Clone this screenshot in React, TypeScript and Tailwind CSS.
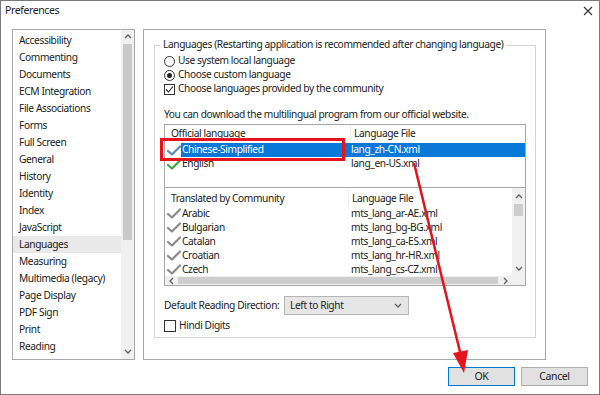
import React from "react";

const categories = [
  "Accessibility",
  "Commenting",
  "Documents",
  "ECM Integration",
  "File Associations",
  "Forms",
  "Full Screen",
  "General",
  "History",
  "Identity",
  "Index",
  "JavaScript",
  "Languages",
  "Measuring",
  "Multimedia (legacy)",
  "Page Display",
  "PDF Sign",
  "Print",
  "Reading",
];

const community = [
  ["Arabic", "mts_lang_ar-AE.xml"],
  ["Bulgarian", "mts_lang_bg-BG.xml"],
  ["Catalan", "mts_lang_ca-ES.xml"],
  ["Croatian", "mts_lang_hr-HR.xml"],
  ["Czech", "mts_lang_cs-CZ.xml"],
];

function Check({ color }: { color: string }) {
  return (
    <svg width="14" height="11" viewBox="0 0 14 11" className="shrink-0">
      <path d="M1 6 L5 9.5 L13 1.5" fill="none" stroke={color} strokeWidth="2.2" strokeLinecap="round" strokeLinejoin="round" />
    </svg>
  );
}

function Chevron({ dir }: { dir: "up" | "down" | "left" | "right" }) {
  const d = {
    up: "M1 5 L4 2 L7 5",
    down: "M1 2 L4 5 L7 2",
    left: "M5 1 L2 4 L5 7",
    right: "M2 1 L5 4 L2 7",
  }[dir];
  return (
    <svg width="8" height="8" viewBox="0 0 8 8">
      <path d={d} fill="none" stroke="#606060" strokeWidth="1.3" />
    </svg>
  );
}

export default function App() {
  return (
    <div
      className="relative w-[600px] h-[395px] bg-white border border-[#7a7a7a] flex flex-col text-[10.2px] tracking-[-0.4px] text-[#222] whitespace-nowrap overflow-hidden"
      style={{ fontFamily: '"Noto Sans", "Open Sans", sans-serif' }}
    >
      {/* title bar */}
      <div className="h-[28px] flex items-center justify-between pl-[4px] pr-[6px] shrink-0">
        <span className="text-[10.5px] -mt-[8px]">Preferences</span>
        <svg width="10" height="10" viewBox="0 0 10 10" className="-mt-[8px]">
          <path d="M1 1 L9 9 M9 1 L1 9" stroke="#333" strokeWidth="1.1" />
        </svg>
      </div>

      <div className="flex gap-[8px] pl-[11px] h-[331px] shrink-0">
        {/* category list */}
        <div className="w-[123px] h-full border border-[#a8a8a8] flex">
          <div className="flex-1 flex flex-col pt-[2px]">
            {categories.map((c) => (
              <div
                key={c}
                className={`h-[17px] leading-[17px] pl-[6px] ${c === "Languages" ? "bg-[#e9e9e9]" : ""}`}
              >
                {c}
              </div>
            ))}
          </div>
          <div className="w-[13px] bg-[#f0f0f0] flex flex-col items-center">
            <div className="h-[14px] flex items-center">
              <Chevron dir="up" />
            </div>
            <div className="w-[9px] h-[196px] bg-[#c9c9c9]" />
            <div className="flex-1" />
            <div className="h-[14px] flex items-center">
              <Chevron dir="down" />
            </div>
          </div>
        </div>

        {/* settings panel */}
        <div className="w-[403px] h-full border border-[#a8a8a8] pt-[15px] pl-[10px] pr-[9px] pb-[21px]">
          <div className="relative h-full border border-[#d5d5d5] px-[9px] pt-[8px]">
            <span className="absolute -top-[9px] left-[5px] bg-white px-[3px]">
              Languages (Restarting application is recommended after changing language)
            </span>
            <div className="flex flex-col">
              <div className="h-[14px] flex items-center gap-[3px]">
                <span className="w-[11px] h-[11px] rounded-full border border-[#333] bg-white" />
                <span>Use system local language</span>
              </div>
              <div className="h-[14px] flex items-center gap-[3px]">
                <span className="w-[11px] h-[11px] rounded-full border border-[#333] bg-white flex items-center justify-center">
                  <span className="w-[5px] h-[5px] rounded-full bg-[#222]" />
                </span>
                <span>Choose custom language</span>
              </div>
              <div className="h-[14px] flex items-center gap-[3px]">
                <span className="w-[11px] h-[11px] border border-[#333] bg-white flex items-center justify-center">
                  <svg width="9" height="9" viewBox="0 0 9 9">
                    <path d="M1 4.5 L3.5 7 L8 1.5" fill="none" stroke="#222" strokeWidth="1.1" />
                  </svg>
                </span>
                <span>Choose languages provided by the community</span>
              </div>
              <div className="h-[14px] leading-[14px] mt-[11px]">
                You can download the multilingual program from our official website.
              </div>
            </div>

            {/* official table */}
            <div className="mt-[3px] border border-[#a8a8a8] h-[64px] flex flex-col">
              <div className="h-[18px] flex items-center">
                <span className="w-[186px] pl-[6px] border-r border-[#ececec] h-full flex items-center">Official language</span>
                <span className="pl-[3px]">Language File</span>
              </div>
              <div className="h-[14px] flex items-center pl-[2px]">
                <span className="w-[14px] flex justify-center"><Check color="#5b87b8" /></span>
                <div className="flex-1 h-full bg-[#0a78d7] text-white flex items-center">
                  <span className="w-[170px] pl-[1px]">Chinese-Simplified</span>
                  <span>lang_zh-CN.xml</span>
                </div>
              </div>
              <div className="h-[14px] flex items-center pl-[2px]">
                <span className="w-[14px] flex justify-center"><Check color="#3fa33f" /></span>
                <span className="w-[170px] pl-[1px]">English</span>
                <span>lang_en-US.xml</span>
              </div>
            </div>

            {/* community table */}
            <div className="border border-[#a8a8a8] border-t-0 h-[98px] flex">
              <div className="flex-1 flex flex-col">
                <div className="h-[19px] flex items-center mt-[2px]">
                  <span className="w-[184px] pl-[6px] border-r border-[#ececec] h-full flex items-center">Translated by Community</span>
                  <span className="pl-[3px]">Language File</span>
                </div>
                {community.map(([n, f]) => (
                  <div key={n} className="h-[14px] flex items-center pl-[2px]">
                    <span className="w-[14px] flex justify-center"><Check color="#8a8a8a" /></span>
                    <span className="w-[170px] pl-[1px]">{n}</span>
                    <span>{f}</span>
                  </div>
                ))}
                <div className="flex-1" />
                <div className="h-[10px] bg-[#f0f0f0] flex items-center">
                  <span className="w-[13px] flex justify-center"><Chevron dir="left" /></span>
                  <div className="w-[320px] h-[7px] bg-[#cdcdcd]" />
                  <div className="flex-1" />
                  <span className="w-[13px] flex justify-center"><Chevron dir="right" /></span>
                </div>
              </div>
              <div className="w-[13px] bg-[#f0f0f0] flex flex-col items-center pb-[10px]">
                <div className="h-[14px] flex items-center mt-[2px]">
                  <Chevron dir="up" />
                </div>
                <div className="w-[9px] h-[12px] bg-[#cdcdcd]" />
                <div className="flex-1" />
                <div className="h-[12px] flex items-center">
                  <Chevron dir="down" />
                </div>
              </div>
            </div>

            <div className="flex items-center mt-[10px] h-[19px]">
              <span className="w-[120px]">Default Reading Direction:</span>
              <div className="w-[125px] h-[19px] border border-[#b5b5b5] bg-[#e6e6e6] flex items-center justify-between pl-[5px] pr-[6px]">
                <span>Left to Right</span>
                <Chevron dir="down" />
              </div>
            </div>
            <div className="h-[14px] flex items-center gap-[3px] mt-[4px]">
              <span className="w-[12px] h-[12px] border border-[#333] bg-white" />
              <span>Hindi Digits</span>
            </div>
          </div>
        </div>
      </div>

      {/* buttons */}
      <div className="flex justify-end gap-[6px] pr-[11px] mt-[7px]">
        <button className="w-[67px] h-[19px] bg-[#e1e1e1] border border-[#0078d7] text-[10.5px]">OK</button>
        <button className="w-[67px] h-[19px] bg-[#e1e1e1] border border-[#adadad] text-[10.5px]">Cancel</button>
      </div>

      {/* annotation overlay */}
      <div className="absolute left-[159px] top-[137px] w-[185px] h-[23px] border-[3px] border-[#e5131c]" />
      <svg className="absolute left-0 top-0 pointer-events-none" width="600" height="395">
        <line x1="413" y1="162" x2="460" y2="355" stroke="#e5131c" strokeWidth="2.5" />
        <polygon points="463,372 452,352 467,349" fill="#e5131c" />
      </svg>
    </div>
  );
}
